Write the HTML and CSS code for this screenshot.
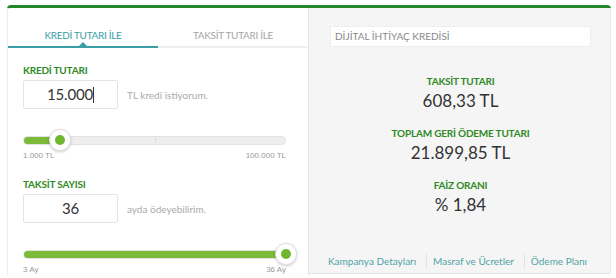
FILE: index.html
```html
<!DOCTYPE html>
<html>
<head>
	<meta charset="utf-8">
	<meta name="viewport" content="width=device-width, initial-scale=1">
	<title>Kredi Hesaplama</title>
	<link rel="stylesheet" href="styles.css">
</head>
<body>
<div class="calc">
	<div class="calc-left">
		<div class="tabs">
			<div class="tab active">KREDİ TUTARI İLE</div>
			<div class="tab">TAKSİT TUTARI İLE</div>
		</div>

		<div class="form">
			<div class="field-title">KREDİ TUTARI</div>
			<div class="field-row">
				<div class="num-input">15.000<span class="caret"></span></div>
				<span class="hint">TL kredi istiyorum.</span>
			</div>
			<div class="slider">
				<div class="track">
					<div class="tick"></div>
					<div class="fill" style="width: 14.14%"></div>
				</div>
				<div class="handle" style="left: 14.14%"></div>
			</div>
			<div class="range-labels"><span>1.000 TL</span><span>100.000 TL</span></div>

			<div class="field-title second">TAKSİT SAYISI</div>
			<div class="field-row">
				<div class="num-input">36</div>
				<span class="hint">ayda ödeyebilirim.</span>
			</div>
			<div class="slider">
				<div class="track">
					<div class="fill" style="width: 100%"></div>
				</div>
				<div class="handle" style="left: 100%"></div>
			</div>
			<div class="range-labels"><span>3 Ay</span><span>36 Ay</span></div>
		</div>
	</div>

	<div class="calc-right">
		<div class="product">DİJİTAL İHTİYAÇ KREDİSİ</div>

		<div class="results">
			<div class="res-title">TAKSİT TUTARI</div>
			<div class="res-value">608,33 TL</div>
			<div class="res-title">TOPLAM GERİ ÖDEME TUTARI</div>
			<div class="res-value">21.899,85 TL</div>
			<div class="res-title">FAİZ ORANI</div>
			<div class="res-value">% 1,84</div>
		</div>

		<div class="links">
			<a href="#">Kampanya Detayları</a>
			<a href="#">Masraf ve Ücretler</a>
			<a href="#">Ödeme Planı</a>
		</div>
	</div>
</div>
</body>
</html>
```

FILE: styles.css
```css
* {
	margin: 0px;
	padding: 0px;
	box-sizing: border-box;
}

body {
	background: #fff;
	font-family: "Lato", "Open Sans", sans-serif;
	color: #333;
}

.calc {
	display: flex;
	margin: 5px 5px 0px 7px;
	border-top: 3px solid #26862a;
	border-radius: 4px 4px 0px 0px;
	height: 270px;
}

.calc-left {
	flex: 0 0 302px;
	border-left: 1px solid #eee;
	border-right: 1px solid #e6e6e6;
}

.tabs {
	display: flex;
}

.tab {
	position: relative;
	flex: 1;
	text-align: center;
	font-size: 10px;
	line-height: 14px;
	padding: 20px 0px 4px;
	color: #a5a5a5;
	border-bottom: 2px solid #eee;
	letter-spacing: -0.3px;
}

.tab.active {
	color: #3a9ea6;
	border-bottom-color: #3a9ea6;
}

.tab.active:after {
	content: "";
	position: absolute;
	left: 50%;
	bottom: 0px;
	margin-left: -4px;
	border-left: 4px solid transparent;
	border-right: 4px solid transparent;
	border-bottom: 4px solid #3a9ea6;
}

.form {
	padding: 16px 22px 0px 15px;
}

.field-title {
	font-size: 10px;
	font-weight: bold;
	line-height: 12px;
	letter-spacing: -0.2px;
	color: #2f8a25;
}

.field-title.second {
	margin-top: 17px;
}

.field-row {
	display: flex;
	align-items: center;
	margin-top: 4px;
}

.num-input {
	width: 95px;
	height: 29px;
	border: 1px solid #e4e4e4;
	border-radius: 2px;
	font-size: 15px;
	line-height: 27px;
	letter-spacing: -0.2px;
	text-align: center;
	color: #333;
}

.caret {
	display: inline-block;
	width: 1px;
	height: 16px;
	background: #333;
	vertical-align: -3px;
}

.hint {
	margin-left: 9px;
	font-size: 10px;
	color: #aaa;
}

.slider {
	position: relative;
	height: 20px;
	margin-top: 21px;
}

.track {
	position: absolute;
	top: 6px;
	left: 0px;
	right: 0px;
	height: 9px;
	background: #eee;
	border: 1px solid #e2e2e2;
	border-radius: 5px;
	overflow: hidden;
}

.tick {
	position: absolute;
	left: 50%;
	top: 1px;
	width: 1px;
	height: 5px;
	background: #ddd;
}

.fill {
	height: 100%;
	background: #7cbb3a;
}

.handle {
	position: absolute;
	top: -1px;
	width: 22px;
	height: 22px;
	margin-left: -11px;
	border-radius: 50%;
	background: #fff;
	border: 1px solid #e0e0e0;
	box-shadow: 0px 1px 3px rgba(0, 0, 0, 0.2);
}

.handle:after {
	content: "";
	position: absolute;
	left: 5px;
	top: 5px;
	width: 10px;
	height: 10px;
	border-radius: 50%;
	background: #6fb62e;
}

.range-labels {
	display: flex;
	justify-content: space-between;
	font-family: "Liberation Sans", Arial, sans-serif;
	font-size: 8px;
	line-height: 10px;
	margin-top: 1px;
	color: #999;
}

.calc-right {
	flex: 1;
	min-width: 0px;
	display: flex;
	flex-direction: column;
	background: #f5f5f5;
	padding: 18px 19px 0px 21px;
	border-right: 1px solid #e8e8e8;
	border-bottom: 1px solid #e4e4e4;
	height: 266px;
}

.product {
	height: 21px;
	background: #fff;
	border: 1px solid #eee;
	font-size: 10px;
	line-height: 19px;
	padding-left: 4px;
	color: #888;
}

.results {
	margin-top: 28px;
	text-align: center;
}

.res-title {
	font-size: 10px;
	font-weight: bold;
	line-height: 12px;
	letter-spacing: -0.2px;
	color: #2f8a25;
	margin-top: 16px;
}

.res-title:first-child {
	margin-top: 0px;
}

.res-value {
	font-size: 17px;
	line-height: 20px;
	margin-top: 4px;
	color: #333;
}

.links {
	display: flex;
	align-items: center;
	justify-content: space-between;
	margin-top: auto;
	margin-bottom: 5px;
	margin-left: -2px;
	padding-right: 4px;
	white-space: nowrap;
}

.links a {
	font-size: 10px;
	line-height: 14px;
	color: #4ea4a6;
	text-decoration: none;
}

.links a + a {
	border-left: 1px solid #e2e2e2;
	padding-left: 6px;
}
```
